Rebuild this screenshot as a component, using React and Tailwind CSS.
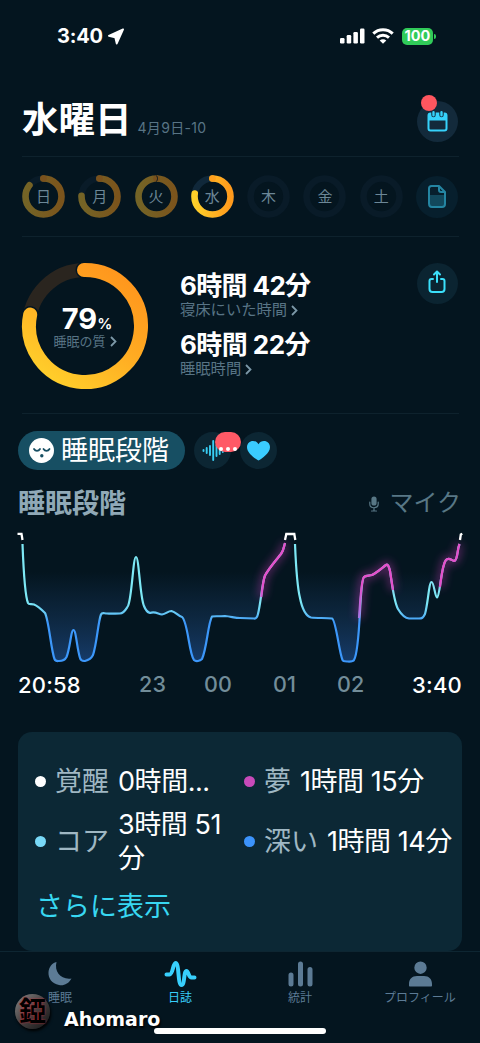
import React from 'react';

const week = [
  { label: '日', value: 87, dim: true },
  { label: '月', value: 77, dim: true },
  { label: '火', value: 100, dim: true },
  { label: '水', value: 79, dim: false },
  { label: '木' },
  { label: '金' },
  { label: '土' }
];

const curve =
  'M22.5 14 C23.5 40 25 66 28 73 C29 75 31 73.5 34 74.5 C38 76 42 80 45 83 C49 91 51 120 54.5 129 C55.5 131.5 57 131 59 131 C63 131 65 130 66.5 127 C70 119 71 100 73.5 100 C76 100 77 119 80 128 C81 131.5 83 131 85 131 C89 130 91 129 93 125 C97 113 98 92 101 84.5 C102 82 104 83.5 107 83.5 C111 84 115 83.5 120 83.5 C124 83.5 126 79 128 76 C132 68 133 27 136 27 C139 27 140 68 144 76 C145.500 80 147 82 150 83 C155 81 158 84 162 84.500 C166 84 168 81 171.500 81 C176 82 178 86 182 87 C188 92 189 124 194 130 C196 132 200 131 202 129 C207 118 208 93 212 86.500 C214 86 218 86.500 225 86 C231 86.500 235 88 240 88 L254 88.500 C256 89 257 88 258 84 C261 72 262 53 265 45.500 C269 38 277 29 281 24 C284 20 284 16 285 13';

const curveEnd =
  'M295 14 C296 38 297 56 300 68 C302 78 306 86 311 87.500 C317 88 325 88 332 88.500 C336 90 339 122 342.500 130 C343 131.500 345 131.500 347 131.500 C349 131.500 353 132 354 130 C361 119 359 52 364 47 C366 45 369 46 372 45 C378 42 382 38 386 35 C388 33.500 389 37 390 41 C392 54 394 72 398 79 C401 84 404 88 409 88.500 L419 88.500 C422 88.500 423 88 425 84 C428 74 429 52 431.500 52 C434 52 435 67 437 67.500 C440 67 441 36 446 30 C449 26.500 452 31 454.500 31 C458 29 457 20 459.500 14';

const dreamParts = [
  'M261.300 67 C262.500 57 263.500 49 265 45.500 C269 38 277 29 281 24 C284 20 284 16 285 13',
  'M359 88 C360.500 70 361 50 364 47 C366 45 369 46 372 45 C378 42 382 38 386 35 C388 33.500 389 37 390 41 C391 47 392 54 393 60',
  'M440 57 C441.500 46 442.500 34 446 30 C449 26.500 452 31 454.500 31 C458 29 457 20 459.500 14'
];

const Divider = () => <div className="ml-[22px] mr-[21px] h-px bg-[#0e222d]" />;

const Chevron = ({ className }) => (
  <svg className={className} viewBox="0 0 7 11" fill="none" stroke="currentColor" strokeWidth="1.8">
    <path d="M1 1l4.500 4.500L1 10" />
  </svg>
);

const DayRing = ({ day }) => {
  const length = 2 * Math.PI * 18;
  const dash = Math.max(0, (length * (day.value || 0)) / 100 - (day.value === 100 ? 4 : 2));
  return (
    <div className="relative flex h-[43px] w-[43px] items-center justify-center">
      <svg className="absolute inset-0" viewBox="0 0 43 43" fill="none">
        <circle cx="21.5" cy="21.5" r="18" stroke={day.dim || !day.value ? '#091b28' : '#10283a'} strokeWidth="6.6" />
        {day.value && (
          <circle
            cx="21.5"
            cy="21.5"
            r="18"
            stroke={day.dim ? 'url(#dayDim)' : 'url(#dayBright)'}
            strokeWidth="6.6"
            strokeLinecap="round"
            strokeDasharray={`${dash} ${length}`}
            transform="rotate(-90 21.5 21.5)"
          />
        )}
        {day.value && <circle cx="21.5" cy="3.5" r="3.3" fill={day.dim ? '#79511d' : '#ff9f1d'} />}
        {day.value === 100 && <path d="M21 .3c2 1.600 2 4.800 0 6.500" stroke="#04151f" />}
      </svg>
      <span className="relative text-[15px] leading-none text-[#6c8797]">{day.label}</span>
    </div>
  );
};

const StatusBar = () => (
  <div className="flex h-[72px] items-center justify-between pr-[44px] pl-[57px] text-white">
    <div className="flex items-center gap-[4px]">
      <span className="text-[20px] leading-none font-bold tracking-[-0.2px]">3:40</span>
      <svg className="h-[17px] w-[18px]" viewBox="0 0 17 17" fill="currentColor" stroke="currentColor" strokeWidth="1.800" strokeLinejoin="round">
        <path d="M15.600 1.300 1.400 7.800l6.300 1.500 1.500 6.300Z" />
      </svg>
    </div>
    <div className="flex items-center">
      <svg className="h-[16px] w-[25px]" viewBox="0 0 25 16" fill="currentColor">
        <rect y="10" width="4.500" height="5.500" rx="1.200" />
        <rect x="6.700" y="7" width="4.500" height="8.500" rx="1.200" />
        <rect x="13.400" y="4" width="4.500" height="11.500" rx="1.200" />
        <rect x="20" y="0.500" width="4.500" height="15" rx="1.200" />
      </svg>
      <svg className="ml-[7px] h-[16px] w-[22px]" viewBox="0 0 22 16" fill="none" stroke="currentColor" strokeWidth="3">
        <path d="M1.300 5.600C6.700.4 15.300.4 20.700 5.600" />
        <path d="M5 9.600c3.400-3.100 8.600-3.100 12 0" />
        <path d="m11 15.700-3.300-3.200c1.800-1.600 4.800-1.600 6.600 0Z" fill="currentColor" stroke="none" />
      </svg>
      <div className="ml-[8px] flex h-[17px] w-[31px] items-center justify-center rounded-[5px] bg-[#31cb59] text-[14.5px] leading-none font-bold">
        100
      </div>
      <div className="ml-px h-[5px] w-[2px] rounded-r bg-[#31cb59]" />
    </div>
  </div>
);

const Header = () => (
  <div className="flex h-[84px] items-center justify-between pr-[22px] pl-[22px]">
    <div className="flex items-baseline pt-[12px]">
      <h1 className="text-[36.500px] leading-[48px] font-bold text-white">水曜日</h1>
      <span className="ml-[6px] text-[14px] leading-none tracking-[0.3px] text-[#587485]">4月9日-10</span>
    </div>
    <div className="relative mt-[14px] flex h-[41px] w-[41px] items-center justify-center rounded-full bg-[#132a3b]">
      <svg className="h-[21px] w-[21px]" viewBox="0 0 21 21" fill="none">
        <rect x="1.500" y="2.500" width="18" height="17" rx="2" stroke="#36d2fb" strokeWidth="2" />
        <path d="M1 9.500V4.500C1 3 2 2 3.500 2h14C19 2 20 3 20 4.500v5Z" fill="#36d2fb" />
        <path d="M6.500 1v3M14.500 1v3" stroke="#132a3b" strokeWidth="4.400" strokeLinecap="round" />
        <path d="M6.500 1.200v3M14.500 1.200v3" stroke="#36d2fb" strokeWidth="2.400" strokeLinecap="round" />
      </svg>
      <div className="absolute -top-[6px] left-[4px] h-[16px] w-[16px] rounded-full bg-[#ff565f]" />
    </div>
  </div>
);

const Quality = () => (
  <div className="flex h-[176px] pt-[25px] pr-[22px] pl-[21px]">
    <div className="relative h-[128px] w-[128px]">
      <svg className="absolute inset-0" viewBox="0 0 128 128" fill="none">
        <circle cx="64" cy="64" r="56" stroke="#2a251f" strokeWidth="14" />
        <path d="M63 8H64A56 56 0 1 1 9.200 52.500" stroke="#04151f" strokeWidth="17" strokeLinecap="round" />
        <path d="M63 8H64A56 56 0 1 1 9.200 52.500" stroke="url(#quality)" strokeWidth="14" strokeLinecap="round" />
      </svg>
      <div className="relative flex h-full flex-col items-center pt-[42px]">
        <div className="flex h-[30px] items-baseline pl-[4px] text-white">
          <span className="text-[29px] leading-[30px] font-bold">79</span>
          <span className="text-[15px] leading-none font-semibold">%</span>
        </div>
        <div className="flex items-center text-[13px] leading-[14px] text-[#587485]">
          睡眠の質
          <Chevron className="ml-[4px] h-[11px] w-[7px] text-[#7c98a8]" />
        </div>
      </div>
    </div>
    <div className="ml-[31px] flex flex-1 flex-col pt-[8px]">
      <p className="text-[26px] leading-[32px] font-bold tracking-[-0.650px] text-white">6時間 42分</p>
      <div className="flex h-[16px] items-center text-[15.300px] leading-none text-[#587485]">
        寝床にいた時間
        <Chevron className="ml-[4px] h-[11px] w-[7px] text-[#7c98a8]" />
      </div>
      <p className="mt-[11px] text-[26px] leading-[32px] font-bold tracking-[-0.550px] text-white">6時間 22分</p>
      <div className="flex h-[16px] items-center text-[15.300px] leading-none text-[#587485]">
        睡眠時間
        <Chevron className="ml-[4px] h-[11px] w-[7px] text-[#7c98a8]" />
      </div>
    </div>
    <div className="mt-px flex h-[41px] w-[41px] items-center justify-center rounded-full bg-[#0b2431]">
      <svg className="mr-[2px] mb-[4px] h-[24px] w-[18px]" viewBox="0 0 18 24" fill="none" stroke="#3be0fb" strokeWidth="2" strokeLinecap="round" strokeLinejoin="round">
        <path d="M5 9H3.500C2 9 1.500 10 1.500 11v8c0 2 1 3 3 3h9c2 0 3-1 3-3v-8c0-1-.5-2-2-2H13" />
        <path d="M9 12V2M6 4.500l3-3 3 3" />
      </svg>
    </div>
  </div>
);

const Chips = () => (
  <div className="flex h-[39px] items-center pl-[18px]">
    <div className="flex h-[39px] w-[167px] items-center rounded-full bg-[#174f63] pl-[11px]">
      <svg className="h-[25px] w-[25px]" viewBox="0 0 25 25" fill="none" stroke="#174f63" strokeWidth="1.800" strokeLinecap="round">
        <circle cx="12.500" cy="12.500" r="12.500" fill="#fff" stroke="none" />
        <path d="M5 11c1.500 2.500 4.500 2.500 6 0M14.500 11c1.500 2.500 4.500 2.500 6 0" />
        <circle cx="12.800" cy="17.800" r="1.700" fill="#174f63" stroke="none" />
      </svg>
      <span className="ml-[7px] text-[27px] leading-none text-white">睡眠段階</span>
    </div>
    <div className="relative ml-[9px] flex h-[37px] w-[37px] items-center justify-center rounded-full bg-[#0c2633]">
      <svg className="h-[21px] w-[22px]" viewBox="0 0 22 21" stroke="#38cdf2" strokeWidth="1.900" strokeLinecap="round">
        <path d="M1.500 10v1M4.700 8v5M8 6v9M11.200 1v19M14.500 5v11M17.700 7v7M20.800 9v3" />
      </svg>
      <div className="absolute top-0 left-[21px] flex h-[20px] w-[26px] items-end justify-center gap-[3px] rounded-[10px] bg-[#ff5966] pb-px">
        <i className="h-1 w-1 rounded-full bg-white" />
        <i className="h-1 w-1 rounded-full bg-white" />
        <i className="h-1 w-1 rounded-full bg-white" />
      </div>
    </div>
    <div className="ml-[9px] flex h-[37px] w-[37px] items-center justify-center rounded-full bg-[#0c2633]">
      <svg className="mt-px h-[20px] w-[23px]" viewBox="0 0 23 20" fill="#3accff">
        <path d="M11.500 19.500C8 17.500 0 12 0 6.200 0 2.500 2.700 0 6 0c2.300 0 4.300 1.200 5.500 3.200C12.700 1.200 14.700 0 17 0c3.300 0 6 2.500 6 6.200 0 5.800-8 11.300-11.500 13.300Z" />
      </svg>
    </div>
  </div>
);

const Chart = () => (
  <svg className="block h-[140px] w-full" viewBox="0 0 480 140" fill="none">
    <path d={`${curve} L285 0 H22.5 Z`} fill="url(#area)" />
    <path d={`${curveEnd} L459.5 0 H295 Z`} fill="url(#area)" />
    <g stroke="url(#line)" strokeWidth="2.200" strokeLinejoin="round">
      <path d={curve} />
      <path d={curveEnd} />
    </g>
    {dreamParts.map(d => (
      <g key={d}>
        <path d={d} stroke="#d33cc0" strokeWidth="7" opacity=".4" filter="url(#glow)" />
        <path d={d} stroke="url(#dream)" strokeWidth="2.200" />
      </g>
    ))}
    <path d="M17.500 3.800h4l1 6.200M285 10l1.300-6h8l1 6M460 10l.8-5.500 1.500-.8" stroke="#fff" strokeWidth="2.300" />
  </svg>
);

const TimeAxis = () => (
  <div className="flex h-[30px] items-center px-[18px] text-[21.500px] leading-none font-medium tracking-[0.2px] text-[#728d99]">
    <span className="w-[121px] text-[22px] text-white">20:58</span>
    <span className="w-[65px]">23</span>
    <span className="w-[69px]">00</span>
    <span className="w-[64px]">01</span>
    <span>02</span>
    <span className="ml-auto text-[22px] text-white">3:40</span>
  </div>
);

const Stage = ({ dot, name, children }) => (
  <div className="flex items-center">
    <i className={`h-[11px] w-[11px] shrink-0 rounded-full ${dot}`} />
    <span className="ml-[9px] shrink-0 pt-[2px] text-[#9fb7c3]">{name}</span>
    <span className="ml-[9px] pt-[2px] tracking-[-0.450px] text-white">{children}</span>
  </div>
);

const StageCard = () => (
  <div className="mx-[18px] mt-[32px] h-[219px] rounded-[14px] bg-[#0c2835] pt-[31px] pl-[17px] text-[27px] leading-[34px]">
    <div className="grid grid-cols-[209px_1fr] whitespace-nowrap">
      <Stage dot="bg-white" name="覚醒">0時間...</Stage>
      <Stage dot="bg-[#c84ab9]" name="夢">1時間 15分</Stage>
    </div>
    <div className="mt-[7px] grid grid-cols-[209px_1fr] whitespace-nowrap">
      <Stage dot="bg-[#79d9f7]" name="コア">3時間 51<br />分</Stage>
      <Stage dot="bg-[#3c93fb]" name="深い">1時間 14分</Stage>
    </div>
    <div className="mt-[14px] pl-px text-[#38d8f2]">さらに表示</div>
  </div>
);

const tabs = [
  {
    label: '睡眠',
    icon: <path d="M8.500 1C6 11 13 19 23.500 17.500 20.500 23 15.500 25 11 24 4 22.500 0 17.500.5 11 1 6 4 2 8.500 1Z" fill="currentColor" />
  },
  {
    label: '日誌',
    active: true,
    icon: <path d="M-1.500 13.500H1.500c3.500 0 3.500-11.500 6-11.500 4 0 2 22 6 22 3.500 0 2-14 5-14 2 0 2 6.500 5 6.500h3" stroke="currentColor" strokeWidth="4" strokeLinecap="round" strokeLinejoin="round" />
  },
  {
    label: '統計',
    icon: <path d="M3 14v9M12.500 3v20M22 8.500V23" stroke="currentColor" strokeWidth="5" strokeLinecap="round" />
  },
  {
    label: 'プロフィール',
    icon: <path d="M12.500.5a6.200 6.200 0 1 1 0 12.400 6.200 6.200 0 0 1 0-12.400ZM9 15h7c5 0 8 3 8 8v1.500c0 .6-.4 1-1 1H2c-.6 0-1-.4-1-1V23c0-5 3-8 8-8Z" fill="currentColor" />
  }
];

const TabBar = () => (
  <div className="relative h-[92px] border-t border-[#0e2632]">
    <div className="grid grid-cols-4 pt-[9px]">
      {tabs.map(tab => (
        <div key={tab.label} className={`flex flex-col items-center ${tab.active ? 'text-[#38cffc]' : 'text-[#5c7b95]'}`}>
          <svg className="h-[26px] w-[25px] overflow-visible" viewBox="0 0 25 26" fill="none">{tab.icon}</svg>
          <span className="mt-[3px] text-[12px] leading-[16px] whitespace-nowrap">{tab.label}</span>
        </div>
      ))}
    </div>
    <div className="absolute top-[42px] left-[15px] flex items-center">
      <div className="flex h-[35px] w-[35px] items-center justify-center rounded-full bg-linear-to-br from-[#888] via-[#454040] to-[#151515] text-[27px] leading-none font-bold text-black [text-shadow:0_0_2px_#d22a37] shadow-[1px_2px_3px_#000]">
        錏
      </div>
      <span className="mt-[15px] ml-[14px] font-['DejaVu_Sans'] text-[19px] leading-none font-bold text-white [text-shadow:1px_2px_2px_#000]">Ahomaro</span>
    </div>
    <div className="absolute top-[76px] left-[154px] h-[6px] w-[172px] rounded-full bg-white" />
  </div>
);

const Gradients = () => (
  <svg className="absolute h-0 w-0">
    <defs>
      <linearGradient id="dayDim" x1="0" y1="1" x2="0" y2="0">
        <stop stopColor="#7b541c" />
        <stop offset="1" stopColor="#746426" />
      </linearGradient>
      <linearGradient id="dayBright" x1="0" y1="1" x2="0" y2="0">
        <stop stopColor="#ff9a1c" />
        <stop offset="1" stopColor="#ffd12a" />
      </linearGradient>
      <linearGradient id="quality" x1=".8" y1="0" x2=".1" y2="1">
        <stop stopColor="#ff961d" />
        <stop offset=".45" stopColor="#ffab22" />
        <stop offset="1" stopColor="#ffd22c" />
      </linearGradient>
      <linearGradient id="line" gradientUnits="userSpaceOnUse" x1="0" y1="72" x2="0" y2="92">
        <stop stopColor="#7de8f5" />
        <stop offset=".55" stopColor="#66c9f5" />
        <stop offset="1" stopColor="#3c97fa" />
      </linearGradient>
      <linearGradient id="dream" gradientUnits="userSpaceOnUse" x1="0" y1="55" x2="0" y2="88">
        <stop stopColor="#e64fcb" />
        <stop offset="1" stopColor="#a777e6" />
      </linearGradient>
      <linearGradient id="area" gradientUnits="userSpaceOnUse" x1="0" y1="42" x2="0" y2="131">
        <stop stopColor="#123253" stopOpacity="0" />
        <stop offset=".5" stopColor="#123050" stopOpacity=".65" />
        <stop offset="1" stopColor="#163b69" />
      </linearGradient>
      <filter id="glow" filterUnits="userSpaceOnUse" x="0" y="-20" width="480" height="170">
        <feGaussianBlur stdDeviation="4" />
      </filter>
    </defs>
  </svg>
);

const App = () => {
  return (
    <div className="relative h-[1043px] w-[480px] overflow-hidden bg-[#04151f] font-[Inter,'Noto_Sans_CJK_JP',sans-serif]">
      <Gradients />
      <StatusBar />
      <Header />
      <Divider />
      <div className="flex h-[79px] items-center justify-between pr-[22px] pl-[22px]">
        {week.map(day => <DayRing key={day.label} day={day} />)}
        <div className="flex h-[42px] w-[42px] items-center justify-center rounded-full bg-[#071f2d]">
          <svg className="h-[23px] w-[18px]" viewBox="0 0 18 23" fill="none" stroke="#2485a2" strokeWidth="2" strokeLinejoin="round">
            <path d="M1 10h16v9c0 2-.5 3-3 3H4c-2 0-3-1-3-3Z" fill="#12485c" stroke="none" />
            <path d="M11 1H3.500C2 1 1 2 1 3.500v15C1 21 2 22 4 22h10c2 0 3-1 3-3V7Z" />
            <path d="M11 1v4c0 1.500.5 2 2 2h4" />
          </svg>
        </div>
      </div>
      <Divider />
      <Quality />
      <Divider />
      <div className="h-[17px]" />
      <Chips />
      <div className="mt-[13px] flex h-[38px] items-center justify-between pr-[19px] pl-[18px]">
        <h2 className="pt-[2px] text-[27px] leading-none font-bold text-[#90a9b7]">睡眠段階</h2>
        <div className="flex items-center text-[24px] leading-none text-[#587785]">
          <svg className="mt-[3px] mr-[10px] h-[16px] w-[10px]" viewBox="0 0 10 16" fill="none" stroke="currentColor" strokeWidth="1.200" strokeLinecap="round">
            <rect x="2.400" y=".5" width="5.200" height="9" rx="2.600" fill="currentColor" stroke="none" />
            <path d="M.8 6v2c0 5 8.400 5 8.400 0V6M5 12v3M2.500 15h5" />
          </svg>
          <span className="pt-[2px]">マイク</span>
        </div>
      </div>
      <div className="mt-[9px]">
        <Chart />
        <TimeAxis />
      </div>
      <StageCard />
      <TabBar />
    </div>
  );
};

export default App;
